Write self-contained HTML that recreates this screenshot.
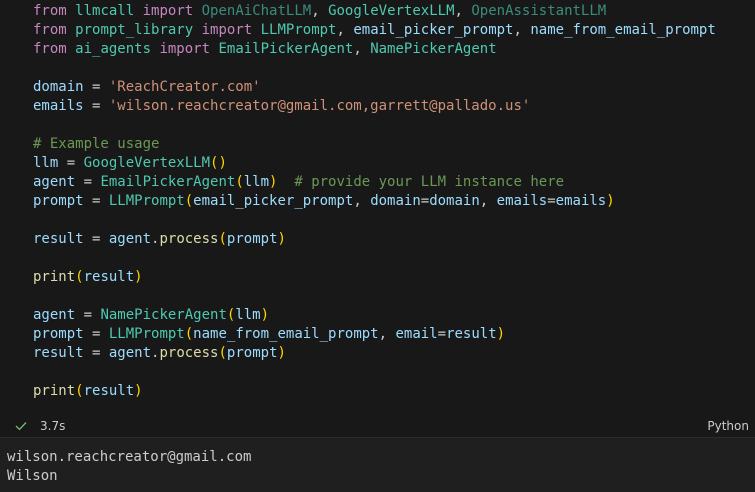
<!DOCTYPE html>
<html><head><style>
body{margin:0;width:755px;height:491px;background:#181818;overflow:hidden;font-family:"DejaVu Sans Mono",monospace;font-size:14px}
.code{position:absolute;left:33px;top:2px;white-space:pre;line-height:19px;color:#cccccc}
.k{color:#c586c0}.v{color:#9cdcfe}.c{color:#4ec9b0}.d{color:#4ec9b0;opacity:.65}.s{color:#ce9178}.f{color:#dcdcaa}.m{color:#6a9955}.b{color:#ffd700}.o{color:#d4d4d4}
.status{position:absolute;top:416px;left:0;width:755px;height:21px;font-family:"DejaVu Sans",sans-serif;font-size:12px;color:#ccc}
.out{position:absolute;top:437px;left:0;width:755px;height:54px;background:#1f1f1f;border-top:1px solid #2b2b2b}
.out pre{margin:0;position:absolute;left:7px;top:10px;line-height:19px;color:#cccccc;font-family:"DejaVu Sans Mono",monospace;font-size:14px}
</style></head><body>
<div class="code"><span class="k">from</span> <span class="c">llmcall</span> <span class="k">import</span> <span class="d">OpenAiChatLLM</span>, <span class="c">GoogleVertexLLM</span>, <span class="d">OpenAssistantLLM</span>
<span class="k">from</span> <span class="c">prompt_library</span> <span class="k">import</span> <span class="c">LLMPrompt</span>, <span class="v">email_picker_prompt</span>, <span class="v">name_from_email_prompt</span>
<span class="k">from</span> <span class="c">ai_agents</span> <span class="k">import</span> <span class="c">EmailPickerAgent</span>, <span class="c">NamePickerAgent</span>

<span class="v">domain</span> = <span class="s">'ReachCreator.com'</span>
<span class="v">emails</span> = <span class="s">'wilson.reachcreator@gmail.com,garrett@pallado.us'</span>

<span class="m"># Example usage</span>
<span class="v">llm</span> = <span class="c">GoogleVertexLLM</span><span class="b">()</span>
<span class="v">agent</span> = <span class="c">EmailPickerAgent</span><span class="b">(</span><span class="v">llm</span><span class="b">)</span>  <span class="m"># provide your LLM instance here</span>
<span class="v">prompt</span> = <span class="c">LLMPrompt</span><span class="b">(</span><span class="v">email_picker_prompt</span>, <span class="v">domain</span>=<span class="v">domain</span>, <span class="v">emails</span>=<span class="v">emails</span><span class="b">)</span>

<span class="v">result</span> = <span class="v">agent</span>.<span class="f">process</span><span class="b">(</span><span class="v">prompt</span><span class="b">)</span>

<span class="f">print</span><span class="b">(</span><span class="v">result</span><span class="b">)</span>

<span class="v">agent</span> = <span class="c">NamePickerAgent</span><span class="b">(</span><span class="v">llm</span><span class="b">)</span>
<span class="v">prompt</span> = <span class="c">LLMPrompt</span><span class="b">(</span><span class="v">name_from_email_prompt</span>, <span class="v">email</span>=<span class="v">result</span><span class="b">)</span>
<span class="v">result</span> = <span class="v">agent</span>.<span class="f">process</span><span class="b">(</span><span class="v">prompt</span><span class="b">)</span>

<span class="f">print</span><span class="b">(</span><span class="v">result</span><span class="b">)</span></div>
<div class="status">
<svg style="position:absolute;left:15px;top:5px" width="12" height="10" viewBox="0 0 12 10"><path d="M1 5 L4.5 8.5 L11 1.5" stroke="#6fbf73" stroke-width="1.3" fill="none"/></svg>
<span style="position:absolute;left:40px;top:3px">3.7s</span>
<span style="position:absolute;right:6px;top:3px">Python</span>
</div>
<div class="out"><pre>wilson.reachcreator@gmail.com
Wilson</pre></div>
</body></html>
